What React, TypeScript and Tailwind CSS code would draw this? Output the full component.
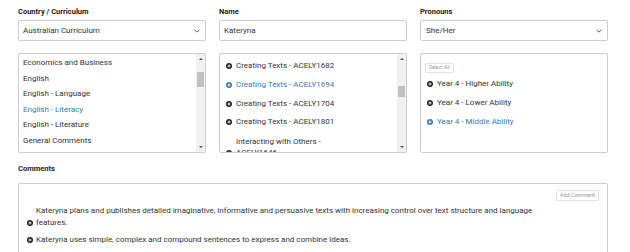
const PlusCircle = ({ className = "" }: { className?: string }) => (
  <svg viewBox="0 0 12 12" className={className} aria-hidden="true">
    <circle cx="6" cy="6" r="6" fill="currentColor" />
    <path d="M6 3v6M3 6h6" stroke="#fff" strokeWidth="1.8" />
  </svg>
);

const Chevron = () => (
  <svg viewBox="0 0 10 6" className="h-[4px] w-[6px] text-[#555]" aria-hidden="true">
    <path d="M1 1l4 4 4-4" fill="none" stroke="currentColor" strokeWidth="1.6" />
  </svg>
);

const Scrollbar = ({ thumbTop, thumbHeight }: { thumbTop: number; thumbHeight: number }) => (
  <div className="relative h-full w-[9px] shrink-0 bg-[#f1f1f1]">
    <div className="absolute left-[2.5px] top-[4px] h-0 w-0 border-x-[2px] border-b-[2px] border-x-transparent border-b-[#505050]" />
    <div
      className="absolute left-[1px] w-[7px] bg-[#c1c1c1]"
      style={{ top: thumbTop, height: thumbHeight }}
    />
    <div className="absolute bottom-[4px] left-[2.5px] h-0 w-0 border-x-[2px] border-t-[2px] border-x-transparent border-t-[#505050]" />
  </div>
);

const subjects = [
  "Economics and Business",
  "English",
  "English - Language",
  "English - Literacy",
  "English - Literature",
  "General Comments",
  "Geographical Knowledge and Understanding",
];

const outcomes = [
  { label: "Creating Texts - ACELY1682", active: false },
  { label: "Creating Texts - ACELY1694", active: true },
  { label: "Creating Texts - ACELY1704", active: false },
  { label: "Creating Texts - ACELY1801", active: false },
];

const levels = [
  { label: "Year 4 - Higher Ability", active: false },
  { label: "Year 4 - Lower Ability", active: false },
  { label: "Year 4 - Middle Ability", active: true },
];

export default function App() {
  return (
    <div
      className="h-[252px] w-[630px] overflow-hidden bg-white pl-[18px] pr-[22px] pt-[5px] text-[#333]"
      style={{ fontFamily: "Roboto, 'Liberation Sans', sans-serif" }}
    >
      <div className="grid grid-cols-3 gap-x-[13px]">
        <div>
          <div className="text-[7.5px] font-bold leading-[13px] text-[#222]">Country / Curriculum</div>
          <div className="mt-[2px] flex h-[21px] items-center justify-between rounded-[2px] border border-[#ccc] pl-[4px] pr-[5px] text-[8px]">
            <span>Australian Curriculum</span>
            <Chevron />
          </div>
        </div>
        <div>
          <div className="text-[7.5px] font-bold leading-[13px] text-[#222]">Name</div>
          <div className="mt-[2px] flex h-[21px] items-center rounded-[2px] border border-[#ccc] pl-[4px] text-[8px]">
            Kateryna
          </div>
        </div>
        <div>
          <div className="text-[7.5px] font-bold leading-[13px] text-[#222]">Pronouns</div>
          <div className="mt-[2px] flex h-[21px] items-center justify-between rounded-[2px] border border-[#ccc] pl-[5px] pr-[5px] text-[8px]">
            <span>She/Her</span>
            <Chevron />
          </div>
        </div>

        <div className="mt-[12px] flex h-[100px] overflow-hidden rounded-[2px] border border-[#ccc]">
          <div className="min-w-0 flex-1 overflow-hidden pl-[4px] pt-[1px] text-[8px]">
            {subjects.map((s) => (
              <div
                key={s}
                className={`whitespace-nowrap leading-[15.5px] ${s === "English - Literacy" ? "text-[#337ab7]" : ""}`}
              >
                {s}
              </div>
            ))}
          </div>
          <Scrollbar thumbTop={18} thumbHeight={15} />
        </div>

        <div className="mt-[12px] flex h-[100px] overflow-hidden rounded-[2px] border border-[#ccc]">
          <div className="min-w-0 flex-1 overflow-hidden pl-[6px] pt-[3px] text-[8px]">
            {outcomes.map((o) => (
              <div
                key={o.label}
                className={`flex h-[18.7px] items-center gap-[4px] ${o.active ? "text-[#337ab7]" : ""}`}
              >
                <PlusCircle className={`h-[6px] w-[6px] shrink-0 ${o.active ? "text-[#337ab7]" : "text-[#222]"}`} />
                <span className="whitespace-nowrap">{o.label}</span>
              </div>
            ))}
            <div className="mt-[4px] flex items-end gap-[4px] leading-[11px]">
              <PlusCircle className="mb-[2px] h-[6px] w-[6px] shrink-0 text-[#222]" />
              <span>
                Interacting with Others -
                <br />
                ACELY1646
              </span>
            </div>
          </div>
          <Scrollbar thumbTop={32} thumbHeight={11} />
        </div>

        <div className="mt-[12px] h-[100px] rounded-[2px] border border-[#ccc] pl-[4px] pt-[7px] text-[8px]">
          <div className="inline-flex h-[10px] items-center rounded-[1px] border border-[#e3e3e3] px-[3px] text-[5px] text-[#999]">
            Select All
          </div>
          <div className="mt-[1px] pl-[2px]">
            {levels.map((l) => (
              <div
                key={l.label}
                className={`flex h-[19px] items-center gap-[4px] ${l.active ? "text-[#337ab7]" : ""}`}
              >
                <PlusCircle className={`h-[6px] w-[6px] shrink-0 ${l.active ? "text-[#337ab7]" : "text-[#222]"}`} />
                <span className="whitespace-nowrap">{l.label}</span>
              </div>
            ))}
          </div>
        </div>
      </div>

      <div className="mt-[9px] text-[7.5px] font-bold leading-[13px] text-[#222]">Comments</div>
      <div className="mt-[8px] h-[80px] rounded-[2px] border border-[#ccc] px-[8px] pt-[6px] text-[8px]">
        <div className="flex justify-end">
          <div className="flex h-[11px] items-center rounded-[1px] border border-[#e3e3e3] px-[3px] text-[5.5px] text-[#999]">
            Add Comment
          </div>
        </div>
        <div className="mt-[4px] flex items-end gap-[3px] leading-[12px]">
          <PlusCircle className="mb-[3px] h-[6px] w-[6px] shrink-0 text-[#222]" />
          <span className="max-w-[505px]">
            Kateryna plans and publishes detailed imaginative, informative and persuasive texts with increasing control over text structure and language features.
          </span>
        </div>
        <div className="mt-[5px] flex items-end gap-[3px] leading-[12px]">
          <PlusCircle className="mb-[3px] h-[6px] w-[6px] shrink-0 text-[#222]" />
          <span>Kateryna uses simple, complex and compound sentences to express and combine ideas.</span>
        </div>
      </div>
    </div>
  );
}
